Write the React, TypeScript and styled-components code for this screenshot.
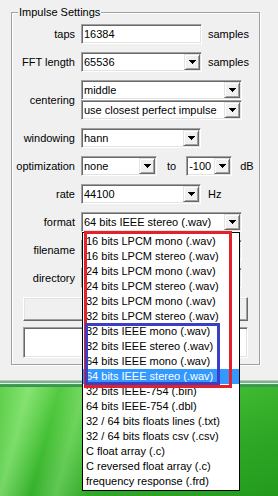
import React from 'react'
import styled, { createGlobalStyle } from 'styled-components'

const GlobalStyle = createGlobalStyle`
  html, body {
    margin: 0;
    padding: 0;
  }
  body {
    width: 278px;
    height: 496px;
    overflow: hidden;
    font-family: "Liberation Sans", Arial, sans-serif;
    font-size: 11px;
    color: #000;
  }
`

const Screen = styled.div`
  width: 278px;
  height: 496px;
  display: flex;
  flex-direction: column;
  overflow: hidden;
`

const Dialog = styled.div`
  height: 380px;
  flex: none;
  background: #f0f0f0;
  padding: 12px 0 0 11px;
  box-sizing: border-box;
`

const Desktop = styled.div`
  flex: 1;
  background:
    linear-gradient(180deg, #b9cdbf 0, #b9cdbf 1px, #7bb48f 1px, #7bb48f 3px, #e6f3e8 3px,
      #e6f3e8 4px, #469c5e 4px, #3a9348 7px, transparent 7px),
    linear-gradient(105deg, rgba(255, 255, 255, 0) 0%, rgba(190, 255, 170, 0.45) 10%,
      rgba(255, 255, 255, 0) 20%, rgba(200, 255, 180, 0.3) 28%, rgba(255, 255, 255, 0) 38%),
    linear-gradient(160deg, #5fd14a 0%, #44c034 35%, #2ea726 70%, #239a1c 100%);
`

const GroupBox = styled.div`
  position: relative;
  width: 249px;
  height: 353px;
  box-sizing: border-box;
  border: 1px solid #a0a0a0;
  box-shadow: inset 1px 1px 0 #fff, 1px 1px 0 #fff;
  padding: 11px 0 5px 0;
  display: flex;
  flex-direction: column;
`

const Legend = styled.span`
  position: absolute;
  top: -7px;
  left: 6px;
  padding: 0 1px;
  line-height: 13px;
  background: #f0f0f0;
`

const FormGrid = styled.div`
  display: grid;
  grid-template-columns: 63px auto;
  column-gap: 6px;
  row-gap: 8px;
`

const Label = styled.div`
  text-align: right;
  align-self: center;
  white-space: nowrap;
`

const FieldRow = styled.div`
  display: flex;
  align-items: center;
  gap: 6px;
`

const FieldStack = styled.div`
  display: flex;
  flex-direction: column;
`

const Unit = styled.span<{ $pad?: number }>`
  white-space: nowrap;
  padding: 0 ${p => p.$pad ?? 0}px;
`

const Field = styled.div<{ $w: number }>`
  position: relative;
  width: ${p => p.$w}px;
  height: 20px;
  flex: none;
  box-sizing: border-box;
  background: #fff;
  border: 1px solid;
  border-color: #a0a0a0 #fff #fff #a0a0a0;
  box-shadow: inset 1px 1px 0 #696969, inset -1px -1px 0 #e3e3e3;
  padding: 1px 1px 1px 2px;
  display: flex;
  align-items: center;
`

const FieldText = styled.span`
  flex: 1;
  white-space: nowrap;
  overflow: hidden;
  line-height: 16px;
`

const DropButton = styled.span`
  width: 16px;
  height: 16px;
  flex: none;
  box-sizing: border-box;
  background: #f0f0f0;
  border: 1px solid;
  border-color: #e3e3e3 #696969 #696969 #e3e3e3;
  box-shadow: inset 1px 1px 0 #fff, inset -1px -1px 0 #a0a0a0;
  display: flex;
  align-items: center;
  justify-content: center;
`

const PushButton = styled.div`
  margin: 9px 0 0 11px;
  width: 225px;
  height: 24px;
  box-sizing: border-box;
  background: #f0f0f0;
  border: 1px solid;
  border-color: #fff #696969 #696969 #fff;
  box-shadow: inset -1px -1px 0 #a0a0a0, inset 1px 1px 0 #e3e3e3;
`

const OutputBox = styled.div`
  margin: 6px 0 0 11px;
  width: 225px;
  height: 31px;
  box-sizing: border-box;
  background: #fff;
  border: 1px solid;
  border-color: #a0a0a0 #fff #fff #a0a0a0;
  box-shadow: inset 1px 1px 0 #696969, inset -1px -1px 0 #e3e3e3;
`

const DropList = styled.div`
  position: absolute;
  top: calc(100% + 1px);
  left: 0;
  width: 158px;
  box-sizing: border-box;
  background: #fff;
  border: 1px solid #000;
  padding: 1px 0;
  z-index: 5;
`

const ListItem = styled.div<{ $selected?: boolean }>`
  height: 15px;
  line-height: 15px;
  padding-left: 3px;
  white-space: nowrap;
  background: ${p => (p.$selected ? '#3399ff' : 'transparent')};
  color: ${p => (p.$selected ? '#fff' : '#000')};
`

const Marker = styled.div<{ $color: string }>`
  position: absolute;
  box-sizing: border-box;
  border: 3px solid ${p => p.$color};
  pointer-events: none;
`

const Arrow = () => (
  <svg width="7" height="4" viewBox="0 0 7 4" shapeRendering="crispEdges">
    <path d="M0 0h7v1h-1v1h-1v1h-1v1h-1v-1h-1v-1h-1v-1h-1z" fill="#000" />
  </svg>
)

const Combo = ({ w, value, children }: { w: number; value: string; children?: React.ReactNode }) => (
  <Field $w={w}>
    <FieldText>{value}</FieldText>
    <DropButton>
      <Arrow />
    </DropButton>
    {children}
  </Field>
)

const formats = [
  '16 bits LPCM mono (.wav)',
  '16 bits LPCM stereo (.wav)',
  '24 bits LPCM mono (.wav)',
  '24 bits LPCM stereo (.wav)',
  '32 bits LPCM mono (.wav)',
  '32 bits LPCM stereo (.wav)',
  '32 bits IEEE mono (.wav)',
  '32 bits IEEE stereo (.wav)',
  '64 bits IEEE mono (.wav)',
  '64 bits IEEE stereo (.wav)',
  '32 bits IEEE-754 (.bin)',
  '64 bits IEEE-754 (.dbl)',
  '32 / 64 bits floats lines (.txt)',
  '32 / 64 bits floats csv (.csv)',
  'C float array (.c)',
  'C reversed float array (.c)',
  'frequency response (.frd)',
]

export default function App() {
  const selected = 9
  return (
    <Screen>
      <GlobalStyle />
      <Dialog>
        <GroupBox>
          <Legend>Impulse Settings</Legend>
          <FormGrid>
            <Label>taps</Label>
            <FieldRow>
              <Field $w={121}>
                <FieldText>16384</FieldText>
              </Field>
              <Unit>samples</Unit>
            </FieldRow>

            <Label>FFT length</Label>
            <FieldRow>
              <Combo w={121} value="65536" />
              <Unit>samples</Unit>
            </FieldRow>

            <Label>centering</Label>
            <FieldStack>
              <Combo w={161} value="middle" />
              <Combo w={161} value="use closest perfect impulse" />
            </FieldStack>

            <Label>windowing</Label>
            <FieldRow>
              <Combo w={120} value="hann" />
            </FieldRow>

            <Label>optimization</Label>
            <FieldRow>
              <Combo w={76} value="none" />
              <Unit $pad={4}>to</Unit>
              <Combo w={46} value="-100" />
              <Unit $pad={2}>dB</Unit>
            </FieldRow>

            <Label>rate</Label>
            <FieldRow>
              <Combo w={120} value="44100" />
              <Unit $pad={1}>Hz</Unit>
            </FieldRow>

            <Label>format</Label>
            <FieldRow>
              <Combo w={161} value={formats[selected]}>
                <DropList>
                  {formats.map((f, i) => (
                    <ListItem key={f} $selected={i === selected}>
                      {f}
                    </ListItem>
                  ))}
                  <Marker $color="#e4202b" style={{ left: 1, top: -2, width: 148, height: 157 }} />
                  <Marker $color="#3a3fc6" style={{ left: 2, top: 90, width: 135, height: 62 }} />
                </DropList>
              </Combo>
            </FieldRow>

            <Label>filename</Label>
            <FieldRow>
              <Field $w={161} />
            </FieldRow>

            <Label>directory</Label>
            <FieldRow>
              <Field $w={161} />
            </FieldRow>
          </FormGrid>
          <PushButton />
          <OutputBox />
        </GroupBox>
      </Dialog>
      <Desktop />
    </Screen>
  )
}
